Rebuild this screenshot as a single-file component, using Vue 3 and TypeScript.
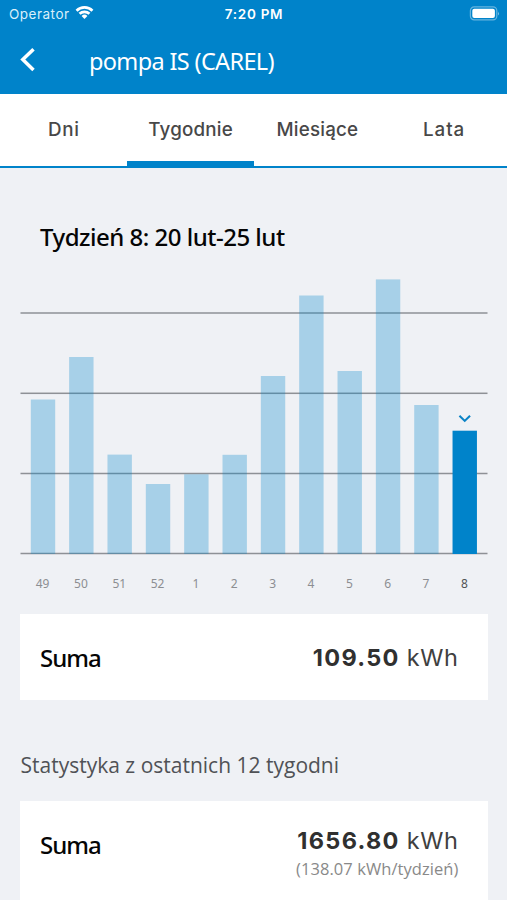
<script setup lang="ts">
import { ref } from 'vue'

interface Bar {
  label: string
  top: number
}

const tabs = [
  { label: 'Dni', spacing: 'normal' },
  { label: 'Tygodnie', spacing: 'tight' },
  { label: 'Miesiące', spacing: 'tight' },
  { label: 'Lata', spacing: 'wide' },
]
const activeTab = ref(1)

const bars: Bar[] = [
  { label: '49', top: 129.5 },
  { label: '50', top: 87 },
  { label: '51', top: 184.6 },
  { label: '52', top: 214 },
  { label: '1', top: 204.3 },
  { label: '2', top: 184.8 },
  { label: '3', top: 106 },
  { label: '4', top: 25.5 },
  { label: '5', top: 101 },
  { label: '6', top: 9.4 },
  { label: '7', top: 135 },
  { label: '8', top: 160.7 },
]
const selected = ref(11)
const gridLines = [43, 123.3, 203.5, 283.5]
const baseY = 284
const pitch = 38.34
const barX = (i: number): number => 30.8 + i * pitch
</script>

<template>
  <div class="screen">
    <header class="header">
      <div class="status">
        <div class="carrier">
          <span>Operator</span>
          <svg class="wifi" width="19" height="15" viewBox="0 0 19 15">
            <path d="M0.6 4.7 A12.6 12.6 0 0 1 18.4 4.7 L16.5 6.7 A9.9 9.9 0 0 0 2.5 6.7 Z" />
            <path d="M3.6 7.8 A8.4 8.4 0 0 1 15.4 7.8 L13.5 9.8 A5.7 5.7 0 0 0 5.5 9.8 Z" />
            <path d="M6.6 10.9 A4.2 4.2 0 0 1 12.4 10.9 L9.5 14 Z" />
          </svg>
        </div>
        <span class="clock">7:20 PM</span>
        <svg class="battery" width="31" height="15" viewBox="0 0 31 15">
          <rect x="1.4" y="0.9" width="26.4" height="13" rx="3.8" fill="none" stroke="#fff" stroke-opacity=".4" stroke-width="1.2" />
          <rect x="3.3" y="2.8" width="22.6" height="9.2" rx="2" fill="#fff" />
          <path d="M29 5.4 Q30.8 7.4 29 9.4 Z" fill="#fff" fill-opacity=".5" />
        </svg>
      </div>
      <div class="nav">
        <svg class="back" width="16" height="26" viewBox="0 0 16 26">
          <path d="M13.5 2.2 L2.8 12.6 L13.5 23" fill="none" stroke="#fff" stroke-width="3.5" />
        </svg>
        <h1>pompa IS (CAREL)</h1>
      </div>
    </header>

    <nav class="tabs">
      <button
        v-for="(tab, i) in tabs"
        :key="tab.label"
        :class="['tab', tab.spacing, { active: i === activeTab }]"
        @click="activeTab = i"
      >
        {{ tab.label }}
      </button>
    </nav>

    <main>
      <h2>Tydzień 8: 20 lut-25 lut</h2>
      <svg class="chart" width="507" height="344" viewBox="0 0 507 344">
        <rect v-for="y in gridLines" :key="y" class="grid" x="20.5" :y="y - 0.75" width="467" height="1.5" />
        <rect
          v-for="(bar, i) in bars"
          :key="bar.label"
          :class="['bar', { selected: i === selected }]"
          :x="barX(i)"
          :y="bar.top"
          width="24.4"
          :height="baseY - bar.top"
          @click="selected = i"
        />
        <path
          class="marker"
          :d="`M${barX(selected) + 6.9} ${bars[selected].top - 15} l5.3 5.2 l5.3 -5.2`"
        />
        <text
          v-for="(bar, i) in bars"
          :key="'w' + bar.label"
          :class="['week', { current: i === selected }]"
          :x="barX(i) + 11.8"
          y="317.7"
        >
          {{ bar.label }}
        </text>
      </svg>

      <section class="card">
        <span class="name">Suma</span>
        <div class="value"><b>109.50</b><span>kWh</span></div>
      </section>

      <h3>Statystyka z ostatnich 12 tygodni</h3>

      <section class="card tall">
        <span class="name">Suma</span>
        <div class="totals">
          <div class="value"><b>1656.80</b><span>kWh</span></div>
          <small>(138.07 kWh/tydzień)</small>
        </div>
      </section>
    </main>
  </div>
</template>

<style>
body {
  background: #eff1f5;
}
</style>

<style scoped>
.screen {
  height: 900px;
  overflow: hidden;
  background: #eff1f5;
  font-family: "Noto Sans", "Open Sans", sans-serif;
}
.header {
  box-sizing: border-box;
  height: 93.6px;
  background: #0083ca;
  color: #fff;
}
.status {
  display: grid;
  grid-template-columns: 1fr auto 1fr;
  align-items: center;
  height: 28px;
  padding: 0 7px 0 9px;
  font: 400 13.5px/20px Inter, sans-serif;
}
.carrier {
  display: flex;
  align-items: center;
  gap: 5.5px;
  letter-spacing: 0.5px;
  color: #d9effa;
}
.wifi {
  fill: #fff;
  margin-top: -3px;
}
.clock {
  font-weight: 600;
  letter-spacing: 0.7px;
  margin-right: 1px;
}
.battery {
  justify-self: end;
  margin-top: -2px;
}
.nav {
  display: flex;
  align-items: center;
  height: 65px;
  padding-left: 20px;
}
.back {
  margin-top: -1px;
}
h1 {
  margin: 0 0 0 53px;
  font-size: 23.5px;
  line-height: 32px;
  font-weight: 400;
  letter-spacing: -0.65px;
}
.tabs {
  display: grid;
  grid-template-columns: repeat(4, 1fr);
  box-sizing: border-box;
  height: 74.6px;
  background: #fff;
  border-bottom: 2.4px solid #0083ca;
}
.tab {
  border: 0;
  border-bottom: 5px solid transparent;
  border-top: 5px solid transparent;
  padding: 1px 0 0 1px;
  background: none;
  color: #484848;
  font: 500 18.8px/24px Inter, sans-serif;
}
.tab.tight { letter-spacing: 0.2px; }
.tab.normal { letter-spacing: 0.7px; }
.tab.wide { letter-spacing: 0.9px; }
.tab.active {
  border-bottom-color: #0083ca;
}
h2 {
  margin: 0;
  padding: 51px 0 0 40px;
  height: 50.8px;
  font-size: 24px;
  line-height: 36px;
  font-weight: 500;
  letter-spacing: -0.5px;
  color: #050505;
}
.chart {
  display: block;
}
.grid {
  fill: #8e9196;
}
.bar {
  fill: #0083ca;
  fill-opacity: 0.3;
}
.bar.selected {
  fill-opacity: 1;
}
.marker {
  fill: none;
  stroke: #0b83c6;
  stroke-width: 2.1;
}
.week {
  font-size: 12px;
  text-anchor: middle;
  fill: #8c8e92;
}
.week.current {
  fill: #505254;
}
.card {
  display: flex;
  justify-content: space-between;
  align-items: center;
  box-sizing: border-box;
  height: 85.7px;
  margin: 0 19.5px 0 20.3px;
  padding: 0 29px 0 19.7px;
  background: #fff;
}
.name {
  padding-top: 2px;
  font-size: 24px;
  line-height: 32px;
  font-weight: 500;
  letter-spacing: -1px;
  color: #050505;
}
.value {
  display: flex;
  gap: 7px;
  padding-top: 2px;
  font: 400 23.5px/32px Inter, sans-serif;
  letter-spacing: 0.6px;
  color: #404040;
}
.value b {
  font-weight: 700;
  letter-spacing: 1.3px;
  color: #303030;
}
h3 {
  margin: 0;
  box-sizing: border-box;
  height: 101.3px;
  padding: 50px 0 0 20.5px;
  font: 400 21px/30px "Open Sans", "Noto Sans", sans-serif;
  color: #505256;
}
.card.tall {
  height: 120px;
  align-items: flex-start;
  padding-top: 22px;
}
.card.tall .name {
  padding-top: 6px;
}
.totals {
  display: flex;
  flex-direction: column;
  align-items: flex-end;
}
.totals small {
  font: 400 16.5px/24px "Open Sans", "Noto Sans", sans-serif;
  letter-spacing: 0.07px;
  color: #898989;
}
</style>
